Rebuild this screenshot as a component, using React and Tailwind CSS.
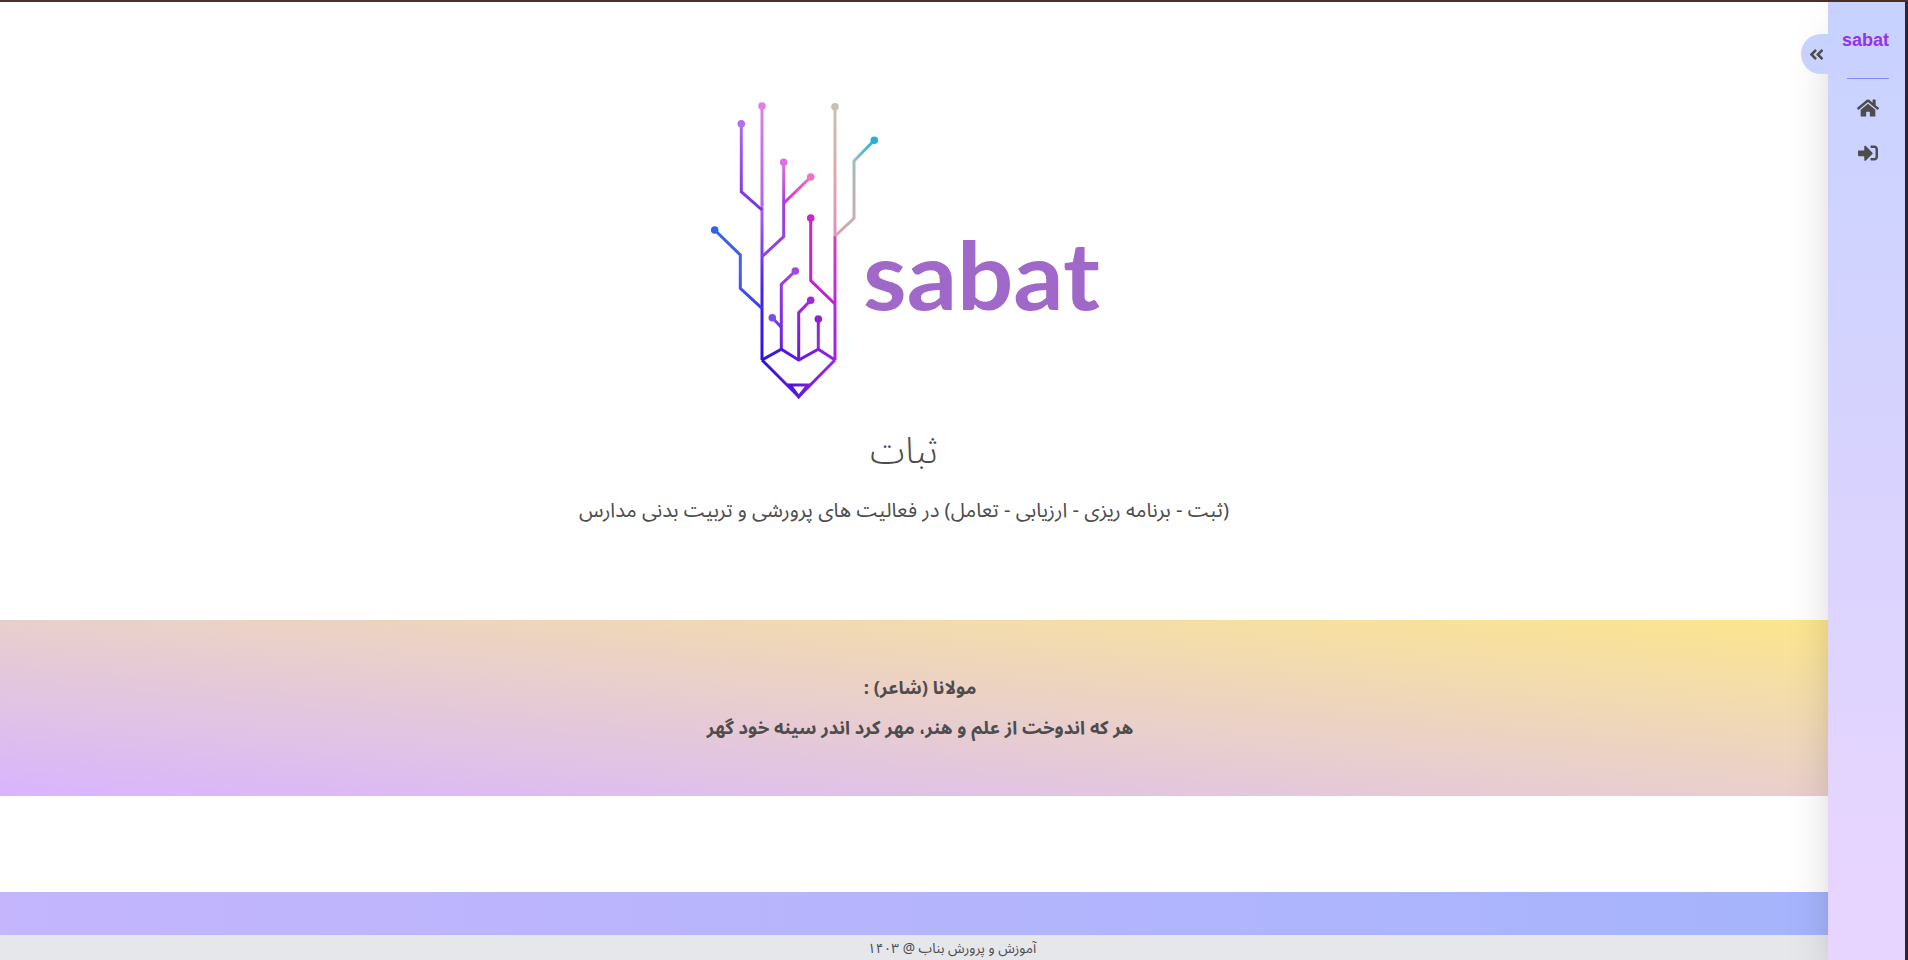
import React from 'react';
import { FaAngleDoubleLeft, FaHome, FaSignInAlt } from 'react-icons/fa';

const font = { fontFamily: '"Noto Sans Arabic", "Noto Sans", sans-serif' };

// circuit branches of the pencil logo, in page-like coordinates
// span = gradient line, stops = [offset, colour]
const branches = [
  { id: 'a', d: 'M762 106V360', span: [762, 106, 762.5, 360], stops: [[0, '#e27ee6'], [0.4, '#b060f0'], [0.72, '#4a20e8'], [1, '#2a12e0']] },
  { id: 'b', d: 'M741.3 124V191.7L762 210', span: [741, 124, 741.5, 210], stops: [[0, '#a96bf0'], [1, '#7a30e0']] },
  { id: 'c', d: 'M783.7 162V236.7L762 256.7', span: [783, 162, 783.5, 257], stops: [[0, '#e070e0'], [0.45, '#a040e0'], [1, '#8a40e8']] },
  { id: 'd', d: 'M810.7 177L783.7 203.3', span: [810, 177, 784, 203], stops: [[0, '#ee70c8'], [0.7, '#e040c8'], [1, '#a840e0']] },
  { id: 'e', d: 'M714.7 230L740.3 255V288.3L762 308.3', span: [715, 230, 715.5, 308], stops: [[0, '#2f62ea'], [0.5, '#4a60ee'], [1, '#3a40ec']] },
  { id: 'f', d: 'M835 107V236', span: [835, 107, 835.5, 236], stops: [[0, '#c9c0b4'], [0.55, '#dcaaa8'], [1, '#e090c0']] },
  { id: 'g', d: 'M835 236V360', span: [835, 236, 835.5, 360], stops: [[0, '#d040c0'], [1, '#a020e0']] },
  { id: 'h', d: 'M874.3 140.3L854 161V218.3L835 236', span: [874, 140, 874.5, 236], stops: [[0, '#25aee0'], [0.22, '#a0bcb8'], [0.8, '#c8b0b0'], [1, '#dca0b0']] },
  { id: 'i', d: 'M810.7 218V280.7L835 304', span: [810, 218, 810.5, 304], stops: [[0, '#c828c8'], [1, '#c020d0']] },
  { id: 'j', d: 'M795.3 271L781.3 284.3V349.3', span: [795, 271, 795.5, 349], stops: [[0, '#a040e0'], [1, '#6a20e0']] },
  { id: 'k', d: 'M810.7 300.3L798.7 312.7V360', span: [810, 300, 810.5, 360], stops: [[0, '#a428d8'], [1, '#6a18d8']] },
  { id: 'l', d: 'M818.3 319V349.3', span: [818, 319, 818.5, 349], stops: [[0, '#9020d0'], [1, '#9030e0']] },
  { id: 'm', d: 'M772.3 317.7L781.3 327.3', span: [772, 317, 772.5, 327], stops: [[0, '#7a50e8'], [1, '#7030e0']] },
  { id: 'n', d: 'M762 360L781.3 349.3L798.7 360L818.3 349.3L835 360', span: [762, 355, 835, 355.5], stops: [[0, '#2a12e0'], [1, '#a020e0']] },
  { id: 'o', d: 'M762 360L798.7 396.7L835 360', span: [762, 380, 835, 380.5], stops: [[0, '#2a12d8'], [1, '#a028e0']] },
  { id: 'p', d: 'M790 385H808L798.7 396.7Z', span: [790, 390, 808, 390.5], stops: [[0, '#4a14d0'], [1, '#7a20d8']] },
];

const dots = [
  [762, 106, '#e27ee6'],
  [741.3, 123.7, '#b070f0'],
  [783.7, 162.3, '#e070e0'],
  [810.7, 177, '#ee70c8'],
  [714.7, 230, '#2f62ea'],
  [835, 106.7, '#c9c0b4'],
  [874.3, 140.3, '#25aee0'],
  [810.7, 218, '#c828c8'],
  [795.3, 271, '#a848e0'],
  [810.7, 300.3, '#a428d8'],
  [818.3, 319, '#9020d0'],
  [772.3, 317.7, '#7a50e8'],
];

const Logo = () => (
  <svg viewBox="700 95 420 310" width="420" height="310" dir="ltr" className="block ml-3">
    <defs>
      {branches.map((b) => (
        <linearGradient key={b.id} id={b.id} gradientUnits="userSpaceOnUse" x1={b.span[0]} y1={b.span[1]} x2={b.span[2]} y2={b.span[3]}>
          {b.stops.map(([o, c]) => <stop key={o} offset={o} stopColor={c} />)}
        </linearGradient>
      ))}
    </defs>
    {branches.map((b) => (
      <path key={b.id} d={b.d} fill="none" stroke={`url(#${b.id})`} strokeWidth="3" strokeLinejoin="miter" />
    ))}
    {dots.map(([x, y, c]) => (
      <circle key={`${x}-${y}`} cx={x} cy={y} r="3.8" fill={c} />
    ))}
    <text x="863" y="310" direction="ltr" textAnchor="start" fill="#a068c8" fontSize="94" fontWeight="700" fontFamily="Lato, sans-serif" textLength="237" lengthAdjust="spacingAndGlyphs">sabat</text>
  </svg>
);

export default function App() {
  return (
    <div style={font} className="h-[960px] w-full flex flex-col bg-[#2b2b2b] overflow-hidden text-[#4d4d4d]">
      <div className="h-[2px] shrink-0 bg-[#4a3028]" />
      <div className="flex-1 flex min-h-0 mr-[3px]">
        <main className="flex-1 min-w-0 flex flex-col bg-white">
          <section dir="rtl" className="h-[618px] pt-[93px] pr-5 flex flex-col items-center">
            <Logo />
            <h1 className="mt-[27px] text-4xl leading-10 font-[350]">ثبات</h1>
            <p className="mt-[25px] text-[20.3px] leading-7">(ثبت - برنامه ریزی - ارزیابی - تعامل) در فعالیت های پرورشی و تربیت بدنی مدارس</p>
          </section>
          <section dir="rtl" className="h-[176px] pl-3 pt-[2px] flex flex-col items-center justify-center gap-3 bg-gradient-to-tr from-[#d8b4fe] to-[#fde68a] font-bold text-[18.4px]">
            <p className="leading-7">مولانا (شاعر) :</p>
            <p className="leading-7">هر که اندوخت از علم و هنر، مهر کرد اندر سینه خود گهر</p>
          </section>
          <div className="h-24 shrink-0" />
          <div className="h-[43px] shrink-0 bg-gradient-to-r from-[#c4b5fd] to-[#a5b4fc]" />
          <footer dir="rtl" className="h-[25px] shrink-0 pl-[76px] pt-[3px] flex items-center justify-center bg-[#e5e7eb] text-[13.7px] leading-5 whitespace-nowrap">
            آموزش و پرورش بناب @ ۱۴۰۳
          </footer>
        </main>
        <aside className="w-[77px] shrink-0 relative z-10 pl-[19px] bg-gradient-to-b from-[#c7d2fe] to-[#e9d5ff] shadow-2xl">
          <button className="absolute top-[32px] -left-[27px] w-[27px] h-10 rounded-l-full bg-[#c7d2fe] flex items-center justify-center pl-[3px]">
            <FaAngleDoubleLeft size={17} />
          </button>
          <nav className="w-[42px] flex flex-col items-center">
            <div style={{ fontFamily: '"Liberation Sans", sans-serif' }} className="self-end mt-[26px] text-lg leading-6 font-bold text-[#9333ea] whitespace-nowrap">sabat</div>
            <div className="mt-[26px] w-full h-px bg-[#818cf8]" />
            <FaHome size={22} className="mt-[18px]" />
            <FaSignInAlt size={20} className="mt-[24px]" />
          </nav>
        </aside>
      </div>
    </div>
  );
}
